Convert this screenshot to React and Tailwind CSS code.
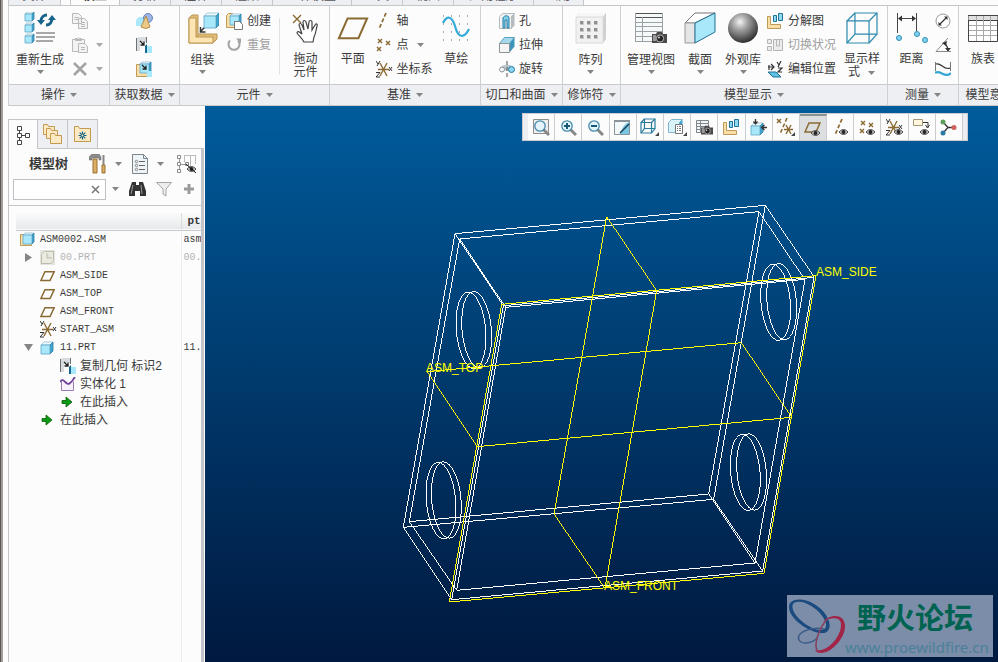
import React, { useState } from 'react';
import clsx from 'clsx';

const Svg = ({ w = 16, h = w, children, ...rest }) => (
  <svg width={w} height={h} viewBox={`0 0 ${w} ${h}`} fill="none" className="shrink-0" {...rest}>
    {children}
  </svg>
);

const Caret = ({ color = '#858585' }) => (
  <Svg w={7} h={4}>
    <path d="M0 0h7L3.500 4z" fill={color} />
  </Svg>
);

// Shared icon parts
const Cube = ({ x = 0, y = 0, s = 8, fill = '#a9e8fb' }) => {
  const d = Math.round(s * 0.22);
  return (
    <g transform={`translate(${x} ${y})`} strokeLinejoin="round">
      <path d={`M0 ${d}L${d} 0H${s}L${s - d} ${d}z`} fill="#f2fbff" stroke="#7fb4cb" strokeWidth=".7" />
      <path d={`M${s - d} ${d}L${s} 0V${s - d}L${s - d} ${s}z`} fill="#3fa5d2" stroke="#2b7ea6" strokeWidth=".8" />
      <path d={`M0 ${d}H${s - d}V${s}H0z`} fill={fill} stroke="#5aa7c6" strokeWidth=".8" />
    </g>
  );
};

const Cross = ({ x, y, s = 4, color = '#8a6a33' }) => (
  <path d={`M${x} ${y}l${s} ${s}M${x + s} ${y}l${-s} ${s}`} stroke={color} strokeWidth="1.4" />
);

const Eye = ({ x, y }) => (
  <g transform={`translate(${x} ${y})`}>
    <path d="M0 3Q4.500 -2 9 3Q4.500 8 0 3z" fill="#d8d8d8" stroke="#444" />
    <circle cx="4.500" cy="3" r="2" fill="#222" />
  </g>
);

const Camera = ({ x, y }) => (
  <g transform={`translate(${x} ${y})`}>
    <path d="M0 3h4l1-2h5l1 2h4v9H0z" fill="#4a4a4a" />
    <rect x="1" y="4" width="3" height="6" fill="#999" />
    <circle cx="8" cy="7.500" r="3.600" fill="#222" stroke="#bbb" />
    <circle cx="7" cy="6.500" r="1" fill="#ddd" />
  </g>
);

const Mark = ({ x, y }) => <path d={`M${x} ${y}v-4l-4 4z`} fill="#444" />;

const WireCube = ({ s = 32, c = '#2a88ad' }) => {
  const a = s * 0.28;
  const e = s - 1;
  return (
    <g stroke={c} strokeWidth="1.200">
      <path d={`M1 ${a}H${e - a + 1}V${e}H1zM${a} 1H${e}V${e - a}H${a}z`} />
      <path d={`M1 ${a}L${a} 1M${e - a + 1} ${a}L${e} 1M${e - a + 1} ${e}L${e} ${e - a}M1 ${e}L${a} ${e - a}`} />
    </g>
  );
};

const RegenIcon = () => (
  <Svg w={32}>
    <Cube x={1} y={0} s={9} />
    <Cube x={1} y={11} s={9} />
    <Cube x={1} y={22} s={9} />
    <path d="M12 21h19M12 25h19M12 29h17" stroke="#8c8c8c" strokeWidth="1.500" />
    <path d="M17 9c0-4 3-6 6-6M28 6c0 4-2 7-6 7" stroke="#19658c" strokeWidth="3" />
    <path d="M13 8h8l-4 5zM24 8h8l-4-5z" fill="#19658c" />
  </Svg>
);

const CopyIcon = () => (
  <Svg>
    <g fill="#f3f3f3" stroke="#b9b9b9">
      <path d="M.5.500h6l3 3v7h-9zM6.500 5.500h6l3 3v7h-9z" />
      <path d="M2.500 4.500h4M2.500 6.500h4M9 9.500h4M9 11.500h4M9 13.500h4" />
    </g>
  </Svg>
);

const PasteIcon = () => (
  <Svg>
    <g fill="#f3f3f3" stroke="#b9b9b9">
      <path d="M.5 2.500h12v12H.5zM3.500 3.500v-2h2l1-1 1 1h2v2z" />
      <path d="M6.500 6.500h6l3 3v6h-9z" />
      <path d="M9 10.500h4M9 12.500h4" />
    </g>
  </Svg>
);

const DeleteIcon = () => (
  <Svg>
    <path d="M2 2l12 12M14 2L2 14" stroke="#a3a3a3" strokeWidth="2.500" />
  </Svg>
);

const ShapesIcon = () => (
  <Svg w={17}>
    <path d="M0 7l3-3h7v7l-2 2H0z" fill="#a9e8fb" />
    <circle cx="12" cy="5" r="4.500" fill="#9db5e3" stroke="#6581bf" />
    <path d="M10 3L5 14q5 3 9 0z" fill="#ecca88" stroke="#b98d47" />
  </Svg>
);

const CopyGeomIcon = () => (
  <Svg>
    <path d="M0 2l2-2h9v5H4v9H0z" fill="#d9dcdf" />
    <path d="M.5 1v13M10.500 0v6" stroke="#6c7175" />
    <path d="M4 4l4 4M8 4.500V8H4.500" stroke="#222" strokeWidth="1.300" />
    <path d="M9 9l2-2v9H9z" fill="#15688e" />
    <path d="M11 9h5v7h-5z" fill="#a9e8fb" />
  </Svg>
);

const ShrinkIcon = () => (
  <Svg>
    <path d="M.5 3.500h4v8h8v4H.5z" fill="#fbdea6" stroke="#bd9a5a" />
    <Cube x={4} y={1} s={11} />
    <path d="M6 4l4 4M10 4.500V8H6.500" stroke="#222" strokeWidth="1.300" />
    <path d="M11 10h5v6h-5z" fill="#a9e8fb" />
  </Svg>
);

const AssembleIcon = () => (
  <Svg w={32}>
    <g stroke="#b99552" strokeLinejoin="round">
      <path d="M2 6l3-3h6v19h19v5l-4 4H2z" fill="#e3bd77" />
      <path d="M2 6h7v19h17v6H2z" fill="#fde4b3" />
      <path d="M9 25l3-3" />
    </g>
    <path d="M20 13l-6 6M13.500 15v5h5" stroke="#333" strokeWidth="1.500" />
    <Cube x={17} y={1} s={15} />
  </Svg>
);

const CreateIcon = () => (
  <Svg w={17} h={17}>
    <path d="M.5 2.500l2-2h4v10h8v4H.5z" fill="#fbdea6" stroke="#bd9a5a" />
    <Cube x={4} y={1} s={11} />
    <path d="M8.500 8.500h5l3 3v5h-8z" fill="#fff" stroke="#777" />
  </Svg>
);

const RepeatIcon = () => (
  <Svg w={17} h={16}>
    <path d="M4 3.500a5.500 5.500 0 1 0 8 0" stroke="#a3a3a3" strokeWidth="2" />
    <path d="M10 1.500h5v5z" fill="#a3a3a3" />
  </Svg>
);

const DragIcon = () => (
  <Svg w={32}>
    <Cross x={3} y={3} s={8} color="#8a6a33" />
    <path
      d="M14 30c-2-4-5-6-7-9 0-2 2-2 5 1L9 13c0-2 2-2 3 0l2 5-1-8c0-2 2-2 3 0l2 7 1-7c0-2 3-2 3 0v8l3-5c1-2 3-1 2 1-1 4-1 7-3 11l-1 5z"
      fill="#fff"
      stroke="#444"
      strokeWidth="1.200"
    />
  </Svg>
);

const PlaneIcon = ({ w = 32, h = 32, sw = 2 }) => (
  <Svg w={w} h={h}>
    <path
      d={`M${w * 0.06} ${h * 0.82}L${w * 0.33} ${h * 0.2}H${w * 0.94}L${w * 0.67} ${h * 0.82}z`}
      stroke="#8a6a33"
      strokeWidth={sw}
    />
  </Svg>
);

const AxisIcon = ({ eye }) => (
  <Svg w={17} h={17}>
    <path d="M10 0L3 16" stroke="#8a6a33" strokeWidth="1.700" strokeDasharray="4 2" />
    {eye && <Eye x={7} y={10} />}
  </Svg>
);

const PointIcon = ({ eye }) => (
  <Svg w={17} h={17}>
    <Cross x={2} y={2} />
    <Cross x={10} y={4} />
    <Cross x={1} y={10} />
    {eye && <Eye x={7} y={10} />}
  </Svg>
);

const CsysIcon = ({ eye, color = '#8a6a33' }) => (
  <Svg w={17} h={17}>
    <path d="M2 8.500h11M4 2l7 13M11 2L4 15" stroke={color} strokeWidth="1.400" />
    <path d="M0 0l2 3M4 0L1 5M13 6l3 4M16 6l-3 4M0 11.500h4L0 16h4" stroke="#333" />
    {eye && <Eye x={8} y={10} />}
  </Svg>
);

const SketchIcon = () => (
  <Svg w={32}>
    <path
      d="M3 4h27M3 12h27M3 20h27M3 28h27"
      stroke="#555"
      strokeWidth="1"
      strokeDasharray="1 7"
    />
    <path d="M3 11c4-8 9-7 12 3 3 12 9 13 14 3" stroke="#36aadb" strokeWidth="2.200" />
  </Svg>
);

const HoleIcon = () => (
  <Svg>
    <path d="M.5 3.500l3-3h12l-3 3v12H.5z" fill="#f0f2f3" stroke="#b5babd" />
    <path d="M12.500 3.500l3-3v12l-3 3z" fill="#b5babd" />
    <path d="M4 15V5c1-3 6-3 6 0v10H8V7H6v8z" fill="#7fd0ee" stroke="#267ba0" />
  </Svg>
);

const ExtrudeIcon = () => (
  <Svg>
    <path d="M.5 6.500l5-6h10l-5 6z" fill="#a5d9ec" stroke="#5ba0bd" />
    <path d="M10.500 6.500l5-6v9l-5 6z" fill="#3d94b9" />
    <path d="M.5 6.500h10v9H.5z" fill="#f5f5f5" stroke="#8d9499" />
  </Svg>
);

const RevolveIcon = () => (
  <Svg>
    <path d="M2 6c3-3 9-3 12 0v5c-3-2-9-2-12 0z" fill="#b7c5cc" />
    <circle cx="3" cy="8.500" r="2.500" fill="#f5f5f5" stroke="#8b969c" />
    <circle cx="12.500" cy="8.500" r="3" fill="#8cd5f2" stroke="#26789c" />
    <path d="M8 0v16" stroke="#555" strokeDasharray="4 2" />
  </Svg>
);

const PatternIcon = () => (
  <Svg w={32}>
    <path d="M1 5l3-4h27v26l-3 4z" fill="#cfcfcf" />
    <path d="M1 5l3-4h27l-3 4z" fill="#f6f6f6" />
    <path d="M1 5h27v26H1z" fill="#f1f1f1" stroke="#dadada" />
    {[9, 16, 23].map(y =>
      [5, 12, 19].map(x => (
        <g key={`${x}-${y}`}>
          <rect x={x} y={y} width="4" height="4" fill="#c9c9c9" />
          <rect x={x} y={y} width="3" height="3" fill="#909090" />
        </g>
      ))
    )}
  </Svg>
);

const ViewManagerIcon = ({ small }) =>
  small ? (
    <Svg w={17} h={17}>
      <path d="M.5 1.500h12v12H.5zM.5 4.500h12M.5 7.500h12M.5 10.500h12M4.500 1.500v12" fill="#f3f6f8" stroke="#7f878b" />
      <g transform="translate(5 6) scale(.8)">
        <Camera x={0} y={0} />
      </g>
    </Svg>
  ) : (
    <Svg w={34} h={32}>
      <path d="M1.500 1.500h27v28h-27z" fill="#f6f9fa" />
      <path d="M1 1.500h28M1 5.500h28" stroke="#555" />
      <path d="M1.500 1v29M8.500 5v25M28.500 1v29M1 10.500h28M1 14.500h28M1 19.500h28M1 24.500h28M1 29.500h28" stroke="#9aa2a6" />
      <Camera x={18} y={19} />
    </Svg>
  );

const SectionIcon = () => (
  <Svg w={32}>
    <path d="M1 11L11 1h20L11 11z" fill="#fff" stroke="#777" />
    <path d="M1 11h10v20H1z" fill="#e3e5e7" stroke="#999" />
    <path d="M11 11L31 1v19L11 31z" fill="#a9e8fb" stroke="#1e6f92" />
  </Svg>
);

const SphereIcon = () => (
  <Svg w={32}>
    <defs>
      <radialGradient id="sphere" cx=".4" cy=".3" r=".7">
        <stop offset="0" stopColor="#f4f4f4" />
        <stop offset=".35" stopColor="#a6a6a6" />
        <stop offset="1" stopColor="#303030" />
      </radialGradient>
    </defs>
    <circle cx="16" cy="16" r="15" fill="url(#sphere)" />
  </Svg>
);

const ExplodeIcon = () => (
  <Svg w={17}>
    <path d="M.5 3.500h3v8h10v4H.5z" fill="#fbdea6" stroke="#bd9a5a" />
    <path d="M6.500 2.500h3v6h-3zM11.500.500h4v7h-4z" fill="#8fdaf3" stroke="#207397" />
  </Svg>
);

const SwitchIcon = () => (
  <Svg w={17}>
    <g stroke="#b5b5b5" fill="#ececec">
      <path d="M.5 2.500h4v4h-4zM.5 9.500h4v4h-4zM6.500 2.500h9v11h-9z" />
      <path d="M9.500 3v6h3V3" />
    </g>
  </Svg>
);

const EditPosIcon = () => (
  <Svg w={17} h={17}>
    <path d="M1 6h5M4 3l3 3-3 3M10 1l2 3M14 0l-3 6M11 7h4l-4 4h4M2 4v5" stroke="#333" strokeWidth="1.200" />
    <path d="M1 11h8l5 5H6z" fill="#5fc1e3" stroke="#1c6f94" />
  </Svg>
);

const DisplayStyleIcon = () => (
  <Svg w={32}>
    <WireCube s={32} />
  </Svg>
);

const DistanceIcon = () => (
  <Svg w={34} h={32}>
    <path d="M2.500 1v20M21.500 1v18M4 6.500h16" stroke="#444" />
    <path d="M3 6.500l4-3v6zM21 6.500l-4-3v6z" fill="#333" />
    <g fill="#7ed2f2" stroke="#2e8fb7">
      <circle cx="4" cy="26" r="2.500" />
      <circle cx="22" cy="22" r="2.500" />
      <circle cx="30" cy="28" r="2.500" />
    </g>
  </Svg>
);

const DiameterIcon = () => (
  <Svg>
    <circle cx="8" cy="8" r="7" stroke="#999" fill="#fff" />
    <path d="M4.500 11.500l7-7" stroke="#333" strokeWidth="1.300" />
    <path d="M3.500 12.500V9l3.500 3.500zM12.500 3.500V7L9 3.500z" fill="#333" />
  </Svg>
);

const AngleIcon = () => (
  <Svg>
    <path d="M13 1L1 14.500h15" stroke="#888" />
    <path d="M9 6q4 3 4 8" stroke="#333" strokeWidth="1.300" />
    <path d="M7 6l5-2-1 5zM10 11h6l-3 3.500z" fill="#333" />
  </Svg>
);

const LengthIcon = () => (
  <Svg>
    <path d="M.5 1v9M15.500 1v9" stroke="#777" />
    <path d="M1 3c5-2 8 7 14 4" stroke="#333" strokeWidth="1.200" />
    <path d="M0 12c5-4 10 6 16 0" stroke="#35a5d4" strokeWidth="2.200" />
  </Svg>
);

const TableIcon = () => (
  <Svg w={30} h={32}>
    <path d="M.5 3.500h29v26H.5z" fill="#fff" stroke="#444" />
    <path d="M.5 4h29v4H.5z" fill="#e0e0e0" />
    <path d="M0 3.500h30M0 8.500h30" stroke="#444" />
    <path d="M8.500 4v25M15.500 4v25M22.500 4v25M1 13.500h28M1 18.500h28M1 23.500h28" stroke="#a9a9a9" />
  </Svg>
);

// Ribbon building blocks
const BigButton = ({ icon, label, caret, className }) => (
  <button type="button" className={clsx('flex flex-col items-center pt-[6px]', className)}>
    {icon}
    <span className={clsx('leading-[13px] whitespace-nowrap', caret ? 'mt-[10px]' : 'mt-[9px]')}>
      {label}
    </span>
    {caret && (
      <span className="mt-[3px]">
        <Caret />
      </span>
    )}
  </button>
);

const SmallButton = ({ icon, label, caret, disabled }) => (
  <button
    type="button"
    disabled={disabled}
    className="flex h-6 items-center gap-1 whitespace-nowrap disabled:text-[#a0a0a0]"
  >
    {icon}
    {label && <span>{label}</span>}
    {caret && (
      <span className="ml-1">
        <Caret color={disabled ? '#a8a8a8' : undefined} />
      </span>
    )}
  </button>
);

const Stack = ({ children, className }) => (
  <div className={clsx('flex flex-col items-start pt-[3px]', className)}>{children}</div>
);

const Group = ({ title, className, children, caret = true }) => (
  <section className={clsx('flex shrink-0 flex-col border-r border-[#cfd0d2]', className)}>
    <div className="flex h-[78px] items-start">{children}</div>
    <button
      type="button"
      className="flex h-[22px] items-center justify-center gap-[5px] border-y border-[#c9cacc] bg-[#eeeff2] whitespace-nowrap"
    >
      {title}
      {caret && <Caret />}
    </button>
  </section>
);

const TABS = [
  { label: '分析', width: 'w-[51px]' },
  { label: '注释', width: 'w-[51px]' },
  { label: '渲染', width: 'w-[51px]' },
  { label: '人体模型', width: 'w-[79px]' },
  { label: '工具', width: 'w-[51px]' },
  { label: '视图', width: 'w-[51px]' },
  { label: '应用程序', width: 'w-[80px]' },
  { label: '公用', width: 'w-[50px]' },
];

const RibbonTabs = () => (
  <nav className="flex h-[6px] items-stretch overflow-hidden border-b border-l border-[#c6c7c9] leading-[14px]">
    <button type="button" className="flex w-[52px] items-end justify-center border-r border-[#c6c7c9] bg-[#eeeff2] pb-[2px] text-[#55555a]">
      文件
    </button>
    <span className="w-[9px]" />
    <button type="button" className="-mb-px flex w-[50px] items-end justify-center border-x border-[#c6c7c9] bg-[#fcfcfc] pb-[3px] font-bold">
      模型
    </button>
    {TABS.map(tab => (
      <button
        key={tab.label}
        type="button"
        className={clsx(
          'flex items-end justify-center border-r border-[#c6c7c9] bg-[#eeeff2] pb-[2px] text-[#55555a]',
          tab.width
        )}
      >
        {tab.label}
      </button>
    ))}
  </nav>
);

const Ribbon = () => (
  <header className="overflow-hidden bg-[#fcfcfc]">
    <RibbonTabs />
    <div className="flex border-l border-[#cfd0d2]">
      <Group title="操作" className="w-[101px]">
        <BigButton className="ml-[7px] w-12" icon={<RegenIcon />} label="重新生成" caret />
        <Stack className="ml-2">
          <SmallButton icon={<CopyIcon />} disabled />
          <SmallButton icon={<PasteIcon />} caret disabled />
          <SmallButton icon={<DeleteIcon />} caret disabled />
        </Stack>
      </Group>
      <Group title="获取数据" className="w-[70px]">
        <Stack className="ml-[26px]">
          <SmallButton icon={<ShapesIcon />} />
          <SmallButton icon={<CopyGeomIcon />} />
          <SmallButton icon={<ShrinkIcon />} />
        </Stack>
      </Group>
      <Group title="元件" className="w-[150px]">
        <BigButton className="w-[46px]" icon={<AssembleIcon />} label="组装" caret />
        <Stack className="ml-px">
          <SmallButton icon={<CreateIcon />} label="创建" />
          <SmallButton icon={<RepeatIcon />} label="重复" disabled />
        </Stack>
        <span className="mt-3 ml-2 h-14 w-px bg-[#e0e0e0]" />
        <BigButton
          className="ml-[2px] w-12"
          icon={<DragIcon />}
          label={<>拖动<br />元件</>}
        />
      </Group>
      <Group title="基准" className="w-[151px]">
        <BigButton className="w-[46px]" icon={<PlaneIcon />} label="平面" />
        <Stack>
          <SmallButton icon={<AxisIcon />} label="轴" />
          <SmallButton icon={<PointIcon />} label="点" caret />
          <SmallButton icon={<CsysIcon />} label="坐标系" />
        </Stack>
        <BigButton className="w-12" icon={<SketchIcon />} label="草绘" />
      </Group>
      <Group title="切口和曲面" className="w-[82px]">
        <Stack className="ml-[18px]">
          <SmallButton icon={<HoleIcon />} label="孔" />
          <SmallButton icon={<ExtrudeIcon />} label="拉伸" />
          <SmallButton icon={<RevolveIcon />} label="旋转" />
        </Stack>
      </Group>
      <Group title="修饰符" className="w-[58px]">
        <BigButton className="w-[55px]" icon={<PatternIcon />} label="阵列" caret />
      </Group>
      <Group title="模型显示" className="w-[267px]">
        <BigButton className="ml-[6px] w-12" icon={<ViewManagerIcon />} label="管理视图" caret />
        <BigButton className="w-[50px]" icon={<SectionIcon />} label="截面" caret />
        <BigButton className="w-9" icon={<SphereIcon />} label="外观库" caret />
        <Stack className="ml-[6px]">
          <SmallButton icon={<ExplodeIcon />} label="分解图" />
          <SmallButton icon={<SwitchIcon />} label="切换状况" disabled />
          <SmallButton icon={<EditPosIcon />} label="编辑位置" />
        </Stack>
        <BigButton
          className="ml-[2px] w-12"
          icon={<DisplayStyleIcon />}
          label={
            <>
              显示样
              <span className="flex items-center gap-2 pl-1">
                式 <Caret />
              </span>
            </>
          }
        />
      </Group>
      <Group title="测量" className="w-[71px]">
        <BigButton className="w-[47px]" icon={<DistanceIcon />} label="距离" />
        <Stack>
          <SmallButton icon={<DiameterIcon />} />
          <SmallButton icon={<AngleIcon />} />
          <SmallButton icon={<LengthIcon />} />
        </Stack>
      </Group>
      <Group title="模型意图" className="min-w-[74px] flex-1">
        <BigButton className="w-12" icon={<TableIcon />} label="族表" />
      </Group>
    </div>
  </header>
);

// Side panel icons
const TreeIcon = ({ color = '#444' }) => (
  <Svg w={15} h={20}>
    <path d="M3.500 5v10M4 10.500h6" stroke={color} />
    <path d="M1.500 1.500h4v4h-4zM1.500 8.500h4v4h-4zM1.500 15.500h4v4h-4zM9.500 8.500h4v4h-4z" fill="#fff" stroke={color} />
  </Svg>
);

const Folder = ({ x, y, w = 12, h = 9 }) => (
  <path
    transform={`translate(${x} ${y})`}
    d={`M.5.500h4l1 2h${w - 6}v${h - 1}H.5z`}
    fill="#fdeac5"
    stroke="#c49a50"
  />
);

const FoldersIcon = () => (
  <Svg w={20} h={20}>
    <Folder x={0} y={0} />
    <Folder x={3} y={4} />
    <Folder x={7} y={9} />
  </Svg>
);

const FavoritesIcon = () => (
  <Svg w={18} h={17}>
    <Folder x={0} y={0} w={17} h={14} />
    <path d="M8.500 5.500v8M4.500 9.500h8M5.700 6.700l5.600 5.600M11.300 6.700l-5.600 5.600" stroke="#12617f" strokeWidth="1.200" />
    <circle cx="8.500" cy="9.500" r="1" fill="#fdeac5" />
  </Svg>
);

const HammerIcon = () => (
  <Svg w={17} h={20}>
    <path d="M0 3l3-3h7l2 3v3h-2V4H3v2H0z" fill="#8b8b8b" stroke="#666" strokeWidth=".5" />
    <path d="M4 5h4v14H4z" fill="#dcae63" stroke="#9a7332" />
    <path d="M14.500 1v10" stroke="#888" strokeWidth="2" />
    <path d="M13 11h3v8h-3z" fill="#dcae63" stroke="#9a7332" />
  </Svg>
);

const ListIcon = () => (
  <Svg w={16} h={20}>
    <path d="M.5.500h11l4 4v15H.5z" fill="#eef4f7" stroke="#7a868c" />
    <path d="M11.500.500v4h4" stroke="#7a868c" />
    <path d="M7 7.500h6M7 11.500h6M7 15.500h6" stroke="#666" />
    <g fill="#fff" stroke="#666" strokeWidth=".8">
      <circle cx="4.500" cy="7.500" r="1.200" />
      <circle cx="4.500" cy="11.500" r="1.200" />
      <circle cx="4.500" cy="15.500" r="1.200" />
    </g>
  </Svg>
);

const TreeHideIcon = () => (
  <Svg w={21} h={20}>
    <path d="M3.500 5v10M4 10.500h6" stroke="#999" />
    <path d="M8 1.500h12M8.500 2v6M14.500 2v10M19.500 2v8" stroke="#bbb" />
    <path d="M1.500 1.500h3v3h-3zM1.500 8.500h3v3h-3zM1.500 15.500h3v3h-3zM9.500 8.500h3v3h-3z" fill="#fff" stroke="#888" />
    <Eye x={11} y={12} />
    <path d="M10 10l10 9" stroke="#111" />
  </Svg>
);

const BinocularsIcon = () => (
  <Svg w={17} h={16}>
    <path d="M3 1h4v3h3V1h4l3 9v5h-6v-5H6v5H0v-5z" fill="#333" />
    <path d="M4 4L2 13M12 4l1 9" stroke="#999" />
  </Svg>
);

const FunnelIcon = () => (
  <Svg w={16}>
    <path d="M.5 1.500h15L10 8v7l-3-2V8z" fill="#ededed" stroke="#a5a5a5" />
  </Svg>
);

const PlusIcon = () => (
  <Svg w={12}>
    <path d="M6 1v10M1 6h10" stroke="#9b9b9b" strokeWidth="3" />
  </Svg>
);

const AsmIcon = () => (
  <Svg w={15} h={15}>
    <path d="M.5 2.500h3v8h8v3H.5z" fill="#fbdea6" stroke="#bd9a5a" />
    <Cube x={3} y={1} s={11} />
  </Svg>
);

const PartIcon = () => (
  <Svg w={15} h={14}>
    <Cube x={1} y={1} s={12} />
  </Svg>
);

const DimPartIcon = () => (
  <Svg w={15} h={15}>
    <path d="M0 0h15v15H0z" fill="#e3e3df" />
    <path d="M1.500 4.500l3-3h9v9l-2 3h-10zM7 3v5h5" stroke="#bdbdae" fill="#ecebe2" />
  </Svg>
);

const SolidifyIcon = () => (
  <Svg w={16} h={14}>
    <path d="M1.500 4.500v9h12v-9" stroke="#9a7cb5" fill="#f6f1fa" />
    <path d="M0 5c4-6 6 5 10 1 3-2 3-4 5-6" stroke="#71429a" strokeWidth="1.800" />
  </Svg>
);

const InsertIcon = () => (
  <Svg w={14} h={12}>
    <path d="M2 4.500h4V1l6 5-6 5V7.500H2z" fill="#0c9a12" stroke="#0a5c0d" strokeWidth=".8" />
  </Svg>
);

const TREE = [
  { name: 'ASM0002.ASM', value: 'asm', depth: 0, icon: <AsmIcon /> },
  { name: '00.PRT', value: '00.', depth: 1, icon: <DimPartIcon />, toggle: '▶', dim: true },
  { name: 'ASM_SIDE', depth: 1, icon: <PlaneIcon w={15} h={14} sw={1.5} /> },
  { name: 'ASM_TOP', depth: 1, icon: <PlaneIcon w={15} h={14} sw={1.5} /> },
  { name: 'ASM_FRONT', depth: 1, icon: <PlaneIcon w={15} h={14} sw={1.5} /> },
  { name: 'START_ASM', depth: 1, icon: <CsysIcon /> },
  { name: '11.PRT', value: '11.', depth: 1, icon: <PartIcon />, toggle: '▼' },
  { name: '复制几何 标识2', depth: 2, icon: <CopyGeomIcon />, cjk: true },
  { name: '实体化 1', depth: 2, icon: <SolidifyIcon />, cjk: true },
  { name: '在此插入', depth: 2, icon: <InsertIcon />, cjk: true },
  { name: '在此插入', depth: 1, icon: <InsertIcon />, cjk: true },
];

const INDENT = ['pl-1', 'pl-1', 'pl-11'];

const TreeTable = () => (
  <table className="ml-[7px] w-[185px] shrink-0 table-fixed border-collapse">
    <thead>
      <tr className="h-[17px] border-b border-[#c6c9cc] bg-linear-to-b from-[#fbfbfb] to-[#e6e8ea]">
        <th className="w-[165px] border-r border-[#dcdcdc] p-0" aria-label="名称" />
        <th className="overflow-hidden p-0 pl-[6px] text-left font-['Liberation_Mono',monospace] text-[11px] leading-[14px]">
          ptc
        </th>
      </tr>
    </thead>
    <tbody>
      {TREE.map((row, i) => (
        <tr key={i} className={clsx(row.dim && 'text-[#b4b4b4]')}>
          <td className="border-r border-[#ececec] p-0">
            <div className={clsx('flex h-[18px] items-center', INDENT[row.depth])}>
              {row.depth === 1 && (
                <span className="flex w-5 shrink-0 pl-1">
                  {row.toggle && (
                    <Svg w={9} h={9}>
                      <path d={row.toggle === '▶' ? 'M1 0v9l7-4.500z' : 'M0 1h9L4.500 8z'} fill="#858585" />
                    </Svg>
                  )}
                </span>
              )}
              <span className="flex w-5 shrink-0">{row.icon}</span>
              <span
                className={clsx(
                  'whitespace-nowrap',
                  !row.cjk && "font-['Liberation_Mono',monospace] text-[10px]"
                )}
              >
                {row.name}
              </span>
            </div>
          </td>
          <td className="overflow-hidden p-0 pl-[2px] font-['Liberation_Mono',monospace] text-[10px]">
            {row.value}
          </td>
        </tr>
      ))}
    </tbody>
  </table>
);

const SidePanel = () => {
  const [query, setQuery] = useState('');

  return (
    <aside className="flex w-[197px] shrink-0 flex-col bg-[#fcfcfc] pt-[13px] pr-px">
      <div className="flex h-[29px]">
        <button type="button" aria-label="模型树" className="z-10 -mb-px flex w-[30px] items-center justify-center border border-b-0 border-[#c3c5c8] bg-[#fcfcfc]">
          <TreeIcon />
        </button>
        <button type="button" aria-label="文件夹浏览器" className="flex w-[30px] items-center justify-center border-t border-r border-[#c3c5c8] bg-[#eeeff2]">
          <FoldersIcon />
        </button>
        <button type="button" aria-label="收藏夹" className="flex w-[30px] items-center justify-center border-t border-r border-[#c3c5c8] bg-[#eeeff2]">
          <FavoritesIcon />
        </button>
      </div>
      <div className="flex flex-1 flex-col overflow-hidden border-t border-r-3 border-l border-[#c3c5c8]">
        <div className="flex h-[29px] items-center pl-5">
          <h2 className="w-[60px] text-[13px] font-bold">模型树</h2>
          <button type="button" aria-label="设置" className="flex items-center gap-[9px]">
            <HammerIcon />
            <Caret />
          </button>
          <button type="button" aria-label="显示" className="ml-[10px] flex items-center gap-[9px]">
            <ListIcon />
            <Caret />
          </button>
          <button type="button" aria-label="隐藏树列" className="ml-3">
            <TreeHideIcon />
          </button>
        </div>
        <div className="flex h-[22px] items-center pl-1">
          <div className="flex h-[21px] w-[93px] items-center border border-[#bfc2c5] bg-white">
            <input
              type="text"
              aria-label="搜索"
              value={query}
              onChange={e => setQuery(e.target.value)}
              className="h-full w-[76px] px-1 outline-none"
            />
            <button type="button" aria-label="清除" onClick={() => setQuery('')}>
              <Svg w={11}>
                <path d="M2 2l7 7M9 2L2 9" stroke="#777" strokeWidth="1.500" />
              </Svg>
            </button>
          </div>
          <button type="button" aria-label="搜索选项" className="ml-[6px]">
            <Caret />
          </button>
          <button type="button" aria-label="查找" className="ml-[10px]">
            <BinocularsIcon />
          </button>
          <button type="button" aria-label="过滤" className="ml-[10px]">
            <FunnelIcon />
          </button>
          <button type="button" aria-label="添加" className="ml-[11px]">
            <PlusIcon />
          </button>
        </div>
        <div className="mt-[5px] mb-[7px] h-px shrink-0 bg-[#c3c5c8]" />
        <TreeTable />
        {/* column line continues below the last row */}
        <div className="ml-[7px] w-[166px] flex-1 border-r border-[#ececec]" />
      </div>
    </aside>
  );
};

// Graphics toolbar
const ZoomIcon = ({ sign, frame }) => (
  <Svg w={17} h={17}>
    {frame && <path d="M.5.500h15v14H.5z" stroke="#8d8d8d" fill="#f1f1f1" />}
    <path d="M10 10l6 6" stroke="#888" strokeWidth="3" />
    <circle cx="7" cy="7" r="5.200" fill="#e5f5fb" stroke="#438aaa" strokeWidth="1.300" />
    {sign && <path d={sign === '+' ? 'M7 4v6M4 7h6' : 'M4 7h6'} stroke="#14597c" strokeWidth="2" />}
  </Svg>
);

const RepaintIcon = () => (
  <Svg w={17} h={17}>
    <path d="M.5 1.500h15v14H.5z" fill="#7cc6e2" stroke="#8b9398" />
    <path d="M1 3h14q-5 1-9 12H1z" fill="#f3f8fa" />
    <path d="M6 14l9-9" stroke="#123f56" strokeWidth="1.500" />
    <path d="M0 2h16" stroke="#8b9398" strokeWidth="2" />
  </Svg>
);

const SmallWireIcon = () => (
  <Svg w={19} h={18}>
    <WireCube s={16} c="#2a7d9f" />
    <Mark x={19} y={18} />
  </Svg>
);

const SavedViewIcon = () => (
  <Svg w={19} h={18}>
    <path d="M.5 4.500l3-3h11l-3 3v10H.5z" fill="#d9f3fb" stroke="#7fb4cb" />
    <path d="M11.500 4.500l3-3v6h-3z" fill="#3fa5d2" />
    <path d="M7.500 6.500h7v9h-7z" fill="#fff" stroke="#777" />
    <path d="M9 8.500h1M11 8.500h2M9 10.500h1M11 10.500h2M9 12.500h1M11 12.500h2" stroke="#777" />
    <Mark x={19} y={18} />
  </Svg>
);

const OrientIcon = () => (
  <Svg w={17} h={17}>
    <Cube x={1} y={4} s={12} />
    <path d="M5.500 0v4M3.500 2.500l2 2.500 2-2.500M17 8.500h-4M14.500 6l-3 2.500 3 2.500" stroke="#333" strokeWidth="1.300" />
  </Svg>
);

const DatumIcon = () => (
  <Svg w={19} h={18}>
    <Cross x={1} y={1} />
    <path d="M11 0L4 16" stroke="#8a6a33" strokeWidth="1.500" strokeDasharray="4 2" />
    <path d="M8 11.500h9M10 7l5 9M15 7l-5 9" stroke="#8a6a33" strokeWidth="1.400" />
    <Mark x={19} y={18} />
  </Svg>
);

const PlaneEyeIcon = () => (
  <Svg w={17} h={17}>
    <path d="M1 12L5 3h11l-4 9z" stroke="#8a6a33" strokeWidth="1.500" />
    <Eye x={7} y={10} />
  </Svg>
);

const NoteEyeIcon = () => (
  <Svg w={17} h={17}>
    <path d="M.5.500h9v6h-9z" fill="#fff6dc" stroke="#a3977a" />
    <path d="M10 3.500h5v5M12.500 6l2 3 2-3" stroke="#333" />
    <Eye x={7} y={10} />
  </Svg>
);

const SpinIcon = () => (
  <Svg w={17} h={17}>
    <path d="M3 3l5 5.500L3 14M8 8.500h6" stroke="#333" strokeWidth="1.300" />
    <circle cx="3" cy="3" r="2.500" fill="#5b9e5b" />
    <circle cx="14" cy="8.500" r="2.500" fill="#d0605c" />
    <circle cx="3" cy="14" r="2.500" fill="#2b7aa6" />
  </Svg>
);

const VIEW_TOOLS = [
  { label: '重新调整', icon: <ZoomIcon frame /> },
  { label: '放大', icon: <ZoomIcon sign="+" /> },
  { label: '缩小', icon: <ZoomIcon sign="-" /> },
  { label: '重画', icon: <RepaintIcon /> },
  { label: '显示样式', icon: <SmallWireIcon /> },
  { label: '已保存方向', icon: <SavedViewIcon /> },
  { label: '视图管理器', icon: <ViewManagerIcon small /> },
  { label: '分解图', icon: <ExplodeIcon /> },
  { label: '定向', icon: <OrientIcon /> },
  { label: '基准显示', icon: <DatumIcon /> },
  { label: '平面显示', icon: <PlaneEyeIcon />, active: true },
  { label: '轴显示', icon: <AxisIcon eye /> },
  { label: '点显示', icon: <PointIcon eye /> },
  { label: '坐标系显示', icon: <CsysIcon eye /> },
  { label: '注释显示', icon: <NoteEyeIcon /> },
  { label: '旋转中心', icon: <SpinIcon /> },
];

const ViewToolbar = () => (
  <div className="flex h-7 w-[446px] border border-[#c9ccd0] bg-[#eceef1] pr-1 pl-[5px]">
    {VIEW_TOOLS.map(tool => (
      <button
        key={tool.label}
        type="button"
        aria-label={tool.label}
        className={clsx(
          'flex flex-1 items-center justify-center border-r border-[#c9ccd0]',
          tool.active ? 'border-t-2 border-t-[#8e9092] bg-[#dcdee0]' : 'bg-[#fcfcfc]'
        )}
      >
        {tool.icon}
      </button>
    ))}
  </div>
);

// Wireframe model, drawn at three units per pixel
const HOLES = [
  [243, 421],
  [260, 419],
  [1157, 337],
  [1175, 335],
  [153, 932],
  [169, 930],
  [1066, 847],
  [1085, 846],
];

const Wireframe = () => (
  <svg width="793" height="556" viewBox="0 0 793 556" fill="none" className="absolute top-0 left-0">
    <g transform="translate(185 84) scale(.33333)" strokeWidth="3" shapeRendering="crispEdges">
      <g stroke="#fff">
        <path d="M195 131L1126 46L1272 260M209 147L1107 65L1240 262" />
        <path d="M195 131L40 1012L185 1229M209 147L58 995L200 1201" />
        <path d="M195 131L340 347M209 147L347 352" />
        <path d="M340 347L185 1229L1118 1143L1272 262z" />
        <path d="M347 352L200 1201L1095 1119L1245 268z" />
        <path d="M1126 46L971 928L1118 1143M1107 65L956 912L1095 1119" />
        <path d="M58 995L956 912M40 1012L971 928" />
        {HOLES.map(([x, y]) => (
          <ellipse key={x} cx={x} cy={y} rx="44" ry="115" transform={`rotate(-5 ${x} ${y})`} />
        ))}
      </g>
      <g stroke="#ff0">
        <path d="M335 343L1278 257L1122 1150L178 1236z" />
        <path d="M650 80L800 302L645 1195L492 972z" />
        <path d="M112 545L1054 458L1205 682L262 770z" />
      </g>
    </g>
    <g fill="#ff0" fontSize="12" fontFamily="'Liberation Sans', sans-serif">
      <text x="611" y="170">ASM_SIDE</text>
      <text x="221" y="266">ASM_TOP</text>
      <text x="399" y="484">ASM_FRONT</text>
    </g>
  </svg>
);

const Watermark = () => (
  <div className="absolute right-[5px] bottom-[5px] flex h-[62px] w-[206px] overflow-hidden bg-[#7b8da8]">
    <svg width="58" height="62" viewBox="0 0 58 62" className="shrink-0">
      <path
        fillRule="evenodd"
        fill="#1a4a7e"
        d="M3 8C10 0 30 6 39 20C46 31 42 39 34 38C20 37 -3 20 3 8zM6 9C2 18 21 34 33 35C40 35 41 30 36 22C28 10 11 3 6 9z"
      />
      <path
        fillRule="evenodd"
        fill="#a02547"
        d="M36 26C46 18 57 20 58 30C59 42 45 58 34 58C31 58 29 57 28 55C40 58 54 42 54 30C54 22 46 22 36 26z"
      />
      <path d="M37 34C24 31 8 38 12 45C15 50 26 48 30 43" stroke="#3d5d88" strokeWidth="1.500" fill="none" />
      <path d="M30 55C27 50 31 34 41 23" stroke="#84405f" strokeWidth="1.500" fill="none" />
    </svg>
    <div className="flex flex-col">
      <span className="pl-3 font-['Noto_Sans_CJK_SC',sans-serif] text-[29px] leading-[42px] font-bold text-[#006351]">
        野火论坛
      </span>
      <span className="font-['Noto_Sans',sans-serif] text-[15px] leading-[20px] text-[#4a8099]">
        www.proewildfire.cn
      </span>
    </div>
  </div>
);

const App = () => (
  <div className="flex min-h-screen overflow-hidden bg-[#fcfcfc] font-['Liberation_Sans','Noto_Sans_CJK_SC',sans-serif] text-xs text-[#3a3a3a]">
    <div className="mr-[5px] w-[3px] shrink-0 border-r-2 border-[#a39d9b] bg-[#5a5656]" />
    <div className="flex min-w-0 flex-1 flex-col">
      <Ribbon />
      <div className="flex flex-1">
        <SidePanel />
        <main className="relative flex flex-1 items-start justify-end overflow-hidden bg-linear-to-b from-[#005c9c] to-[#00193f] pt-[7px] pr-[30px]">
          <Wireframe />
          <ViewToolbar />
          <Watermark />
        </main>
      </div>
    </div>
  </div>
);

export default App;
